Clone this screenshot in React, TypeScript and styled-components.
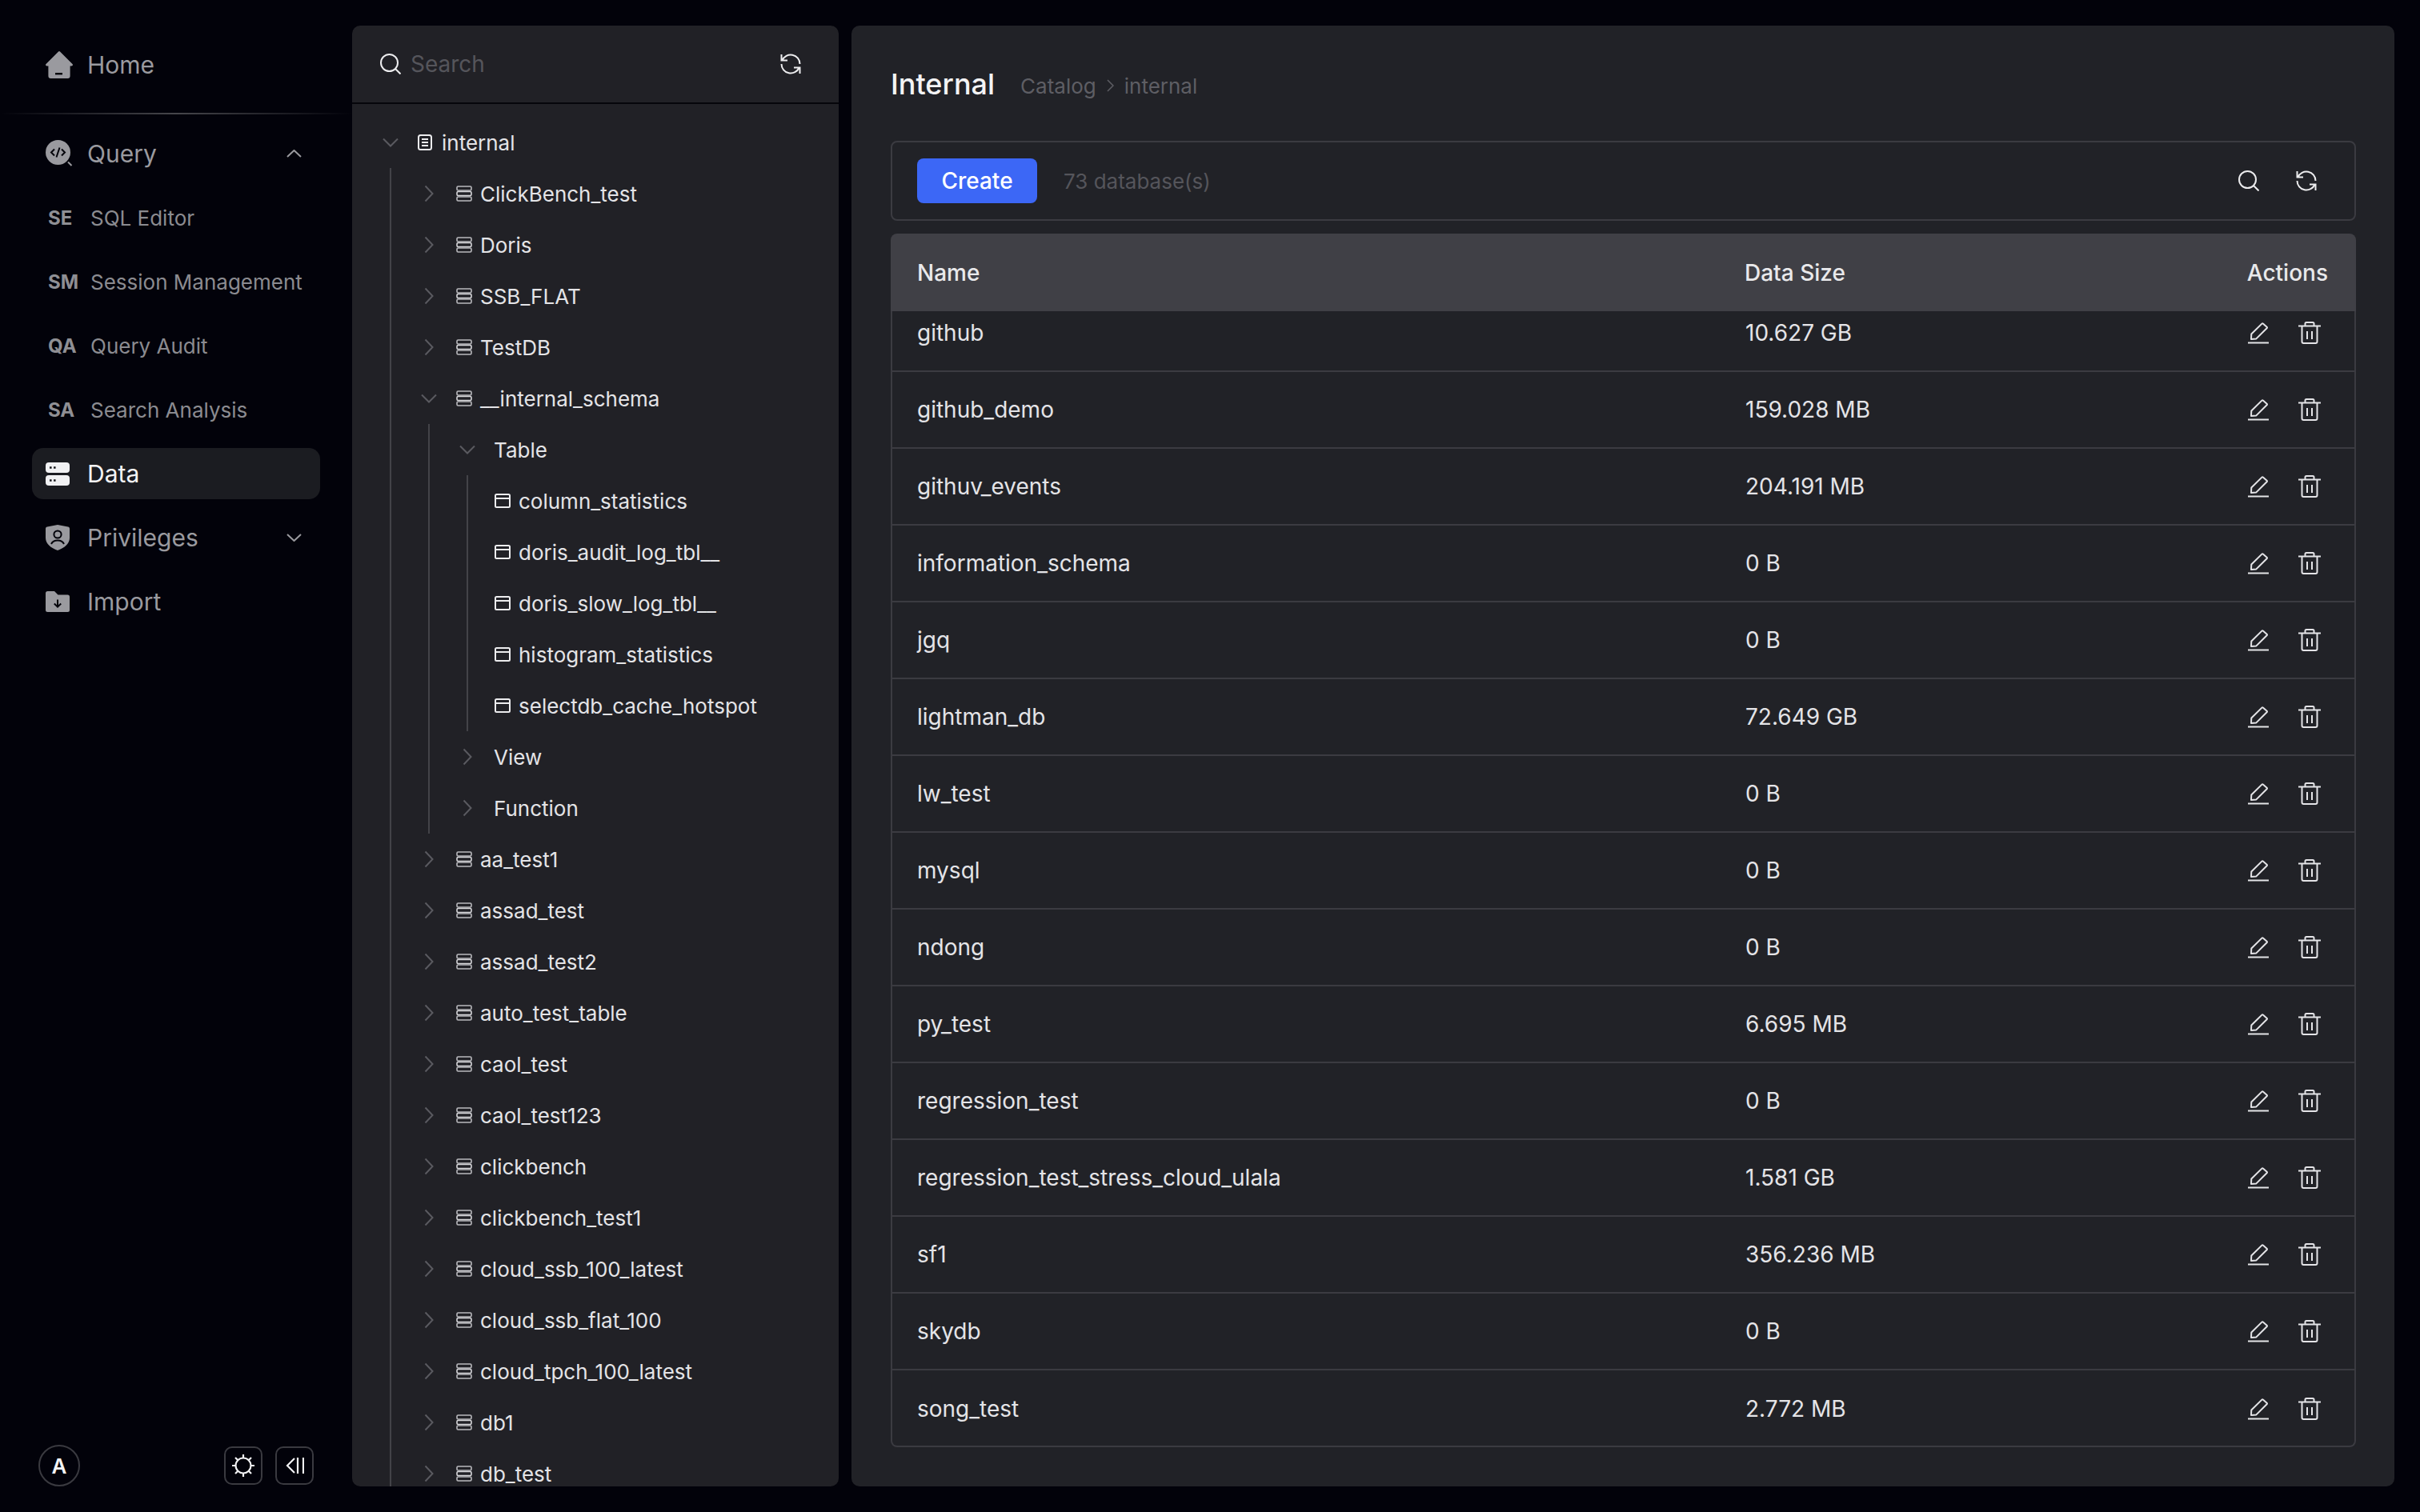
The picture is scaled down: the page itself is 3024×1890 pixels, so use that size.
import React from "react";
import styled, { createGlobalStyle } from "styled-components";

const GlobalStyle = createGlobalStyle`
  html, body {
    margin: 0;
    background: #02020a;
    font-family: Inter, "Noto Sans", sans-serif;
  }
  * {
    box-sizing: border-box;
  }
`;

const Shell = styled.div`
  display: flex;
  height: 100vh;
  padding: 32px 32px 32px 0;
  background: #02020a;
  overflow: hidden;
`;

/* sidebar */

const Sidebar = styled.aside`
  display: flex;
  flex-direction: column;
  flex: 0 0 440px;
  padding-top: 17px;
`;

const Nav = styled.nav`
  display: flex;
  flex-direction: column;
  gap: 16px;
  padding: 0 40px;
`;

const NavRow = styled.div<{ $active?: boolean }>`
  display: flex;
  align-items: center;
  height: 64px;
  padding: 0 23px 0 17px;
  border-radius: 14px;
  font-size: 30px;
  color: ${(p) => (p.$active ? "#f4f4f5" : "#9a9a9f")};
  background: ${(p) => (p.$active ? "#1b1c21" : "transparent")};
`;

const NavIcon = styled.span`
  display: flex;
  align-items: center;
  flex: 0 0 52px;
`;

const SubRow = styled.div`
  display: flex;
  align-items: center;
  height: 64px;
  padding-left: 20px;
  font-size: 26px;
  color: #8b8b90;
`;

const Abbr = styled.span`
  flex: 0 0 53px;
  font-size: 24px;
  font-weight: 700;
  color: #8f8f94;
`;

const NavCaret = styled.svg`
  margin-left: auto;
`;

const Divider = styled.div`
  height: 2px;
  margin: 28px 0 17px;
  background: linear-gradient(90deg, transparent, #46464b 50%, transparent);
`;

const SidebarFooter = styled.div`
  display: flex;
  align-items: center;
  margin-top: auto;
  padding: 0 48px;
`;

const Avatar = styled.div`
  display: flex;
  align-items: center;
  justify-content: center;
  width: 52px;
  height: 52px;
  border: 2px solid #3a3a40;
  border-radius: 50%;
  font-size: 26px;
  font-weight: 600;
  color: #f4f4f5;
`;

const FooterButtons = styled.div`
  display: flex;
  gap: 16px;
  margin-left: auto;
`;

const FooterButton = styled.button`
  display: flex;
  align-items: center;
  justify-content: center;
  width: 48px;
  height: 48px;
  padding: 0;
  background: none;
  border: 2px solid #3a3a40;
  border-radius: 10px;
`;

/* tree panel */

const TreePanel = styled.section`
  display: flex;
  flex-direction: column;
  flex: 0 0 608px;
  margin-right: 16px;
  background: #212126;
  border-radius: 10px;
  overflow: hidden;
`;

const TreeSearch = styled.div`
  display: flex;
  align-items: center;
  flex: 0 0 98px;
  padding: 0 47px 0 35px;
  border-bottom: 2px solid #06060b;
`;

const SearchInput = styled.input`
  flex: 1;
  min-width: 0;
  margin-left: 12px;
  padding: 0;
  background: none;
  border: 0;
  outline: 0;
  font: 400 28px Inter, sans-serif;
  color: #e4e4e7;
  &::placeholder {
    color: #55555b;
    opacity: 1;
  }
`;

const TreeBody = styled.div`
  flex: 1;
  min-height: 0;
  padding: 16px 0 0 32px;
  overflow: hidden;
`;

const TreeRow = styled.div`
  display: flex;
  align-items: center;
  height: 64px;
  font-size: 26px;
  color: #e4e4e7;
  white-space: nowrap;
`;

const Caret = styled.span`
  display: flex;
  align-items: center;
  justify-content: center;
  flex: 0 0 32px;
`;

const TreeIcon = styled.span<{ $leaf?: boolean }>`
  display: flex;
  align-items: center;
  flex: 0 0 30px;
  margin-left: ${(p) => (p.$leaf ? "2px" : "18px")};
`;

const PlainLabel = styled.span`
  margin-left: 17px;
`;

const TreeChildren = styled.div`
  margin-left: 15px;
  padding-left: 31px;
  border-left: 2px solid #434348;
`;

/* main panel */

const MainPanel = styled.main`
  display: flex;
  flex-direction: column;
  flex: 1;
  min-width: 0;
  padding: 48px 48px 48px 49px;
  background: #212227;
  border-radius: 10px;
`;

const TitleRow = styled.header`
  display: flex;
  align-items: center;
  height: 50px;
  margin-bottom: 46px;
`;

const Title = styled.h1`
  margin: 0 32px 0 0;
  font-size: 36px;
  font-weight: 500;
  color: #f4f4f5;
`;

const Crumbs = styled.div`
  display: flex;
  align-items: center;
  gap: 13px;
  margin-top: 4px;
  font-size: 26px;
  color: #5e5e64;
`;

const Toolbar = styled.div`
  display: flex;
  align-items: center;
  flex: 0 0 100px;
  padding: 0 47px 0 31px;
  border: 2px solid #3b3b41;
  border-radius: 8px;
`;

const CreateButton = styled.button`
  width: 150px;
  height: 56px;
  padding: 0;
  background: #3c67f6;
  border: 0;
  border-radius: 8px;
  font: 500 28px Inter, sans-serif;
  color: #fff;
`;

const Count = styled.span`
  margin-left: 33px;
  font-size: 26px;
  color: #55555b;
`;

const ToolbarIcons = styled.div`
  display: flex;
  align-items: center;
  gap: 46px;
  margin-left: auto;
`;

const IconSvg = styled.svg`
  display: block;
  flex-shrink: 0;
`;

const TableWrap = styled.div`
  display: flex;
  flex-direction: column;
  margin-top: 16px;
`;

const TableHead = styled.div`
  display: grid;
  grid-template-columns: 1034px 1fr auto;
  align-items: center;
  height: 97px;
  padding: 0 35px 0 33px;
  background: #404046;
  border-radius: 8px 8px 0 0;
  font-size: 28px;
  font-weight: 500;
  color: #e9e9eb;
`;

const TableBody = styled.div`
  height: 1420px;
  border: solid #3b3b41;
  border-width: 0 2px 2px;
  border-radius: 0 0 8px 8px;
  overflow: hidden;
`;

const TableRow = styled.div<{ $scrolled?: boolean }>`
  display: grid;
  grid-template-columns: 1035px 1fr auto;
  align-items: center;
  height: 96px;
  margin-top: ${(p) => (p.$scrolled ? "-20px" : "0")};
  padding: 0 42px 0 31px;
  border-bottom: 2px solid #3b3b41;
  font-size: 28px;
  color: #e4e4e7;
  &:last-child {
    border-bottom: 0;
  }
`;

const RowActions = styled.div`
  display: flex;
  align-items: center;
  gap: 37px;
`;

/* icons */

const HomeIcon = () => (
  <svg width="34" height="34" viewBox="0 0 34 34">
    <path d="M16 .5a1.5 1.5 0 0 1 2 0L33.5 16c.9.9.4 2.6-1 2.6h-1.9V31a3 3 0 0 1-3 3H6.4a3 3 0 0 1-3-3V18.6H1.5c-1.4 0-1.9-1.7-1-2.6z" fill="#9a9a9f" />
    <rect x="12" y="27" width="9" height="2.4" fill="#02020a" />
  </svg>
);

const QueryIcon = () => (
  <svg width="34" height="34" viewBox="0 0 34 34">
    <circle cx="15.5" cy="15.5" r="15.5" fill="#9a9a9f" />
    <path d="M28 27.5l4.5 4.5" stroke="#9a9a9f" strokeWidth="2" fill="none" />
    <path d="M11 11.5L7 15.5l4 4M20 11.5l4 4-4 4M17.5 9.5l-4 12" stroke="#02020a" strokeWidth="2" fill="none" />
  </svg>
);

const DataIcon = () => (
  <svg width="30" height="30" viewBox="0 0 30 30">
    <rect y="1" width="30" height="13" rx="4" fill="#f1f1f3" />
    <rect y="17" width="30" height="13" rx="4" fill="#f1f1f3" />
    <path d="M5 7.5h2.6M10 7.5h2.6M5 23.5h2.6M10 23.5h2.6" stroke="#1b1c21" strokeWidth="2.4" />
  </svg>
);

const ShieldIcon = () => (
  <svg width="30" height="32" viewBox="0 0 30 32">
    <path d="M15 0l13 2.6c1.2.2 2 1.2 2 2.4v11.5c0 7-6.6 12.6-15 15.5C6.6 29.1 0 23.5 0 16.5V5c0-1.2.8-2.2 2-2.4z" fill="#9a9a9f" />
    <circle cx="15" cy="12" r="4.6" fill="none" stroke="#02020a" strokeWidth="2" />
    <path d="M7 24c1.5-3 4.5-4.4 8-4.4s6.500 1.400 8 4.400" fill="none" stroke="#02020a" strokeWidth="2" />
  </svg>
);

const FolderIcon = () => (
  <svg width="30" height="26" viewBox="0 0 30 26">
    <path d="M0 2.500A2.500 2.500 0 0 1 2.500 0h8.500l4.500 4.500h12A2.500 2.500 0 0 1 30 7v16.500a2.500 2.500 0 0 1-2.500 2.500h-25A2.500 2.500 0 0 1 0 23.500z" fill="#9a9a9f" />
    <path d="M15 10.500v9M10.800 15.500l4.200 4.200 4.200-4.200" fill="none" stroke="#02020a" strokeWidth="2" />
  </svg>
);

const CaretVertical = ({ up }: { up?: boolean }) => (
  <NavCaret width="19" height="10" viewBox="0 0 19 10">
    <path d={up ? "M1 9l8.500-8 8.500 8" : "M1 1l8.500 8 8.500-8"} fill="none" stroke="#9a9a9f" strokeWidth="2" />
  </NavCaret>
);

const SunIcon = () => (
  <svg width="28" height="28" viewBox="0 0 28 28">
    <circle cx="14" cy="14" r="9.500" fill="none" stroke="#f1f1f3" strokeWidth="2.200" />
    <path d="M14 0v4.500M14 23.500V28M0 14h4.500M23.500 14H28M4 4l3.300 3.300M20.700 20.700L24 24M4 24l3.300-3.300M20.700 7.300L24 4" stroke="#f1f1f3" strokeWidth="2.200" />
  </svg>
);

const CollapseIcon = () => (
  <svg width="23" height="20" viewBox="0 0 23 20">
    <path d="M11 1L2 10l9 9" fill="none" stroke="#f1f1f3" strokeWidth="2.200" />
    <path d="M15 0v20M22 0v20" stroke="#f1f1f3" strokeWidth="2.200" />
  </svg>
);

const SearchIcon = () => (
  <IconSvg width="26" height="26" viewBox="0 0 26 26">
    <circle cx="11.500" cy="11.500" r="10.500" fill="none" stroke="#ececee" strokeWidth="2" />
    <path d="M19 19l6.500 6.500" stroke="#ececee" strokeWidth="2" />
  </IconSvg>
);

const RefreshIcon = () => (
  <IconSvg width="26" height="26" viewBox="0 0 26 26">
    <path d="M1.500 1v7.500H9M2.400 8.500A11.500 11.500 0 0 1 24.500 13M24.500 25v-7.500H17M23.600 17.500A11.500 11.500 0 0 1 1.500 13" fill="none" stroke="#ececee" strokeWidth="2" />
  </IconSvg>
);

const ChevronRight = () => (
  <svg width="12" height="22" viewBox="0 0 12 22">
    <path d="M1.500 1.500l9 9.500-9 9.500" fill="none" stroke="#5a5a60" strokeWidth="2" />
  </svg>
);

const ChevronDown = () => (
  <svg width="20" height="12" viewBox="0 0 20 12">
    <path d="M1 1.500l9 9 9-9" fill="none" stroke="#5a5a60" strokeWidth="2" />
  </svg>
);

const CatalogIcon = () => (
  <svg width="18" height="20" viewBox="0 0 18 20">
    <rect x="1" y="1" width="16" height="18" rx="2.500" fill="none" stroke="#ececee" strokeWidth="2" />
    <path d="M5 6h8M5 10h8M5 14h8" stroke="#ececee" strokeWidth="2" />
  </svg>
);

const DatabaseIcon = () => (
  <svg width="20" height="20" viewBox="0 0 20 20">
    <rect x="1" y="1" width="18" height="5" rx="1.500" fill="none" stroke="#b9b9bd" strokeWidth="1.600" />
    <rect x="1" y="7.500" width="18" height="5" rx="1.500" fill="none" stroke="#d8d8db" strokeWidth="1.600" />
    <rect x="1" y="14" width="18" height="5" rx="1.500" fill="none" stroke="#b9b9bd" strokeWidth="1.600" />
  </svg>
);

const TableIcon = () => (
  <svg width="20" height="18" viewBox="0 0 20 18">
    <rect x="1" y="1" width="18" height="16" rx="1.500" fill="none" stroke="#ececee" strokeWidth="2" />
    <path d="M1 6h18" stroke="#ececee" strokeWidth="2" />
  </svg>
);

const EditIcon = () => (
  <IconSvg width="26" height="27" viewBox="0 0 26 27">
    <path d="M4.300 14.500L17.400 1.600a1 1 0 0 1 1.400 0L23.600 5.800a1 1 0 0 1 0 1.400L10.400 20.400l-6.400.6z" fill="none" stroke="#e4e4e7" strokeWidth="2" strokeLinejoin="round" />
    <path d="M0 25.500h26" stroke="#e4e4e7" strokeWidth="2" />
  </IconSvg>
);

const TrashIcon = () => (
  <IconSvg width="28" height="28" viewBox="0 0 28 28">
    <path d="M0 5.500h28M8.500 5.500V2.500A1.500 1.500 0 0 1 10 1h8a1.500 1.500 0 0 1 1.500 1.500v3M4.500 5.500v19.500a2 2 0 0 0 2 2h15a2 2 0 0 0 2-2V5.500M11 12v10M17 12v10" fill="none" stroke="#e4e4e7" strokeWidth="2" />
  </IconSvg>
);

/* data */

const subItems = [
  ["SE", "SQL Editor"],
  ["SM", "Session Management"],
  ["QA", "Query Audit"],
  ["SA", "Search Analysis"],
];

const topDatabases = ["ClickBench_test", "Doris", "SSB_FLAT", "TestDB"];

const schemaTables = [
  "column_statistics",
  "doris_audit_log_tbl__",
  "doris_slow_log_tbl__",
  "histogram_statistics",
  "selectdb_cache_hotspot",
];

const restDatabases = [
  "aa_test1",
  "assad_test",
  "assad_test2",
  "auto_test_table",
  "caol_test",
  "caol_test123",
  "clickbench",
  "clickbench_test1",
  "cloud_ssb_100_latest",
  "cloud_ssb_flat_100",
  "cloud_tpch_100_latest",
  "db1",
  "db_test",
];

const databases = [
  ["github", "10.627 GB"],
  ["github_demo", "159.028 MB"],
  ["githuv_events", "204.191 MB"],
  ["information_schema", "0 B"],
  ["jgq", "0 B"],
  ["lightman_db", "72.649 GB"],
  ["lw_test", "0 B"],
  ["mysql", "0 B"],
  ["ndong", "0 B"],
  ["py_test", "6.695 MB"],
  ["regression_test", "0 B"],
  ["regression_test_stress_cloud_ulala", "1.581 GB"],
  ["sf1", "356.236 MB"],
  ["skydb", "0 B"],
  ["song_test", "2.772 MB"],
];

const DbRow = ({ name, open }: { name: string; open?: boolean }) => (
  <TreeRow>
    <Caret>{open ? <ChevronDown /> : <ChevronRight />}</Caret>
    <TreeIcon>
      <DatabaseIcon />
    </TreeIcon>
    {name}
  </TreeRow>
);

const GroupRow = ({ name, open }: { name: string; open?: boolean }) => (
  <TreeRow>
    <Caret>{open ? <ChevronDown /> : <ChevronRight />}</Caret>
    <PlainLabel>{name}</PlainLabel>
  </TreeRow>
);

const App = () => {
  return (
    <Shell>
      <GlobalStyle />
      <Sidebar>
        <Nav>
          <NavRow>
            <NavIcon>
              <HomeIcon />
            </NavIcon>
            Home
          </NavRow>
        </Nav>
        <Divider />
        <Nav>
          <NavRow>
            <NavIcon>
              <QueryIcon />
            </NavIcon>
            Query
            <CaretVertical up />
          </NavRow>
          {subItems.map(([abbr, label]) => (
            <SubRow key={abbr}>
              <Abbr>{abbr}</Abbr>
              {label}
            </SubRow>
          ))}
          <NavRow $active>
            <NavIcon>
              <DataIcon />
            </NavIcon>
            Data
          </NavRow>
          <NavRow>
            <NavIcon>
              <ShieldIcon />
            </NavIcon>
            Privileges
            <CaretVertical />
          </NavRow>
          <NavRow>
            <NavIcon>
              <FolderIcon />
            </NavIcon>
            Import
          </NavRow>
        </Nav>
        <SidebarFooter>
          <Avatar>A</Avatar>
          <FooterButtons>
            <FooterButton>
              <SunIcon />
            </FooterButton>
            <FooterButton>
              <CollapseIcon />
            </FooterButton>
          </FooterButtons>
        </SidebarFooter>
      </Sidebar>

      <TreePanel>
        <TreeSearch>
          <SearchIcon />
          <SearchInput placeholder="Search" />
          <RefreshIcon />
        </TreeSearch>
        <TreeBody>
          <TreeRow>
            <Caret>
              <ChevronDown />
            </Caret>
            <TreeIcon>
              <CatalogIcon />
            </TreeIcon>
            internal
          </TreeRow>
          <TreeChildren>
            {topDatabases.map((name) => (
              <DbRow key={name} name={name} />
            ))}
            <DbRow name="__internal_schema" open />
            <TreeChildren>
              <GroupRow name="Table" open />
              <TreeChildren>
                {schemaTables.map((name) => (
                  <TreeRow key={name}>
                    <TreeIcon $leaf>
                      <TableIcon />
                    </TreeIcon>
                    {name}
                  </TreeRow>
                ))}
              </TreeChildren>
              <GroupRow name="View" />
              <GroupRow name="Function" />
            </TreeChildren>
            {restDatabases.map((name) => (
              <DbRow key={name} name={name} />
            ))}
          </TreeChildren>
        </TreeBody>
      </TreePanel>

      <MainPanel>
        <TitleRow>
          <Title>Internal</Title>
          <Crumbs>
            Catalog
            <svg width="9" height="16" viewBox="0 0 9 16">
              <path d="M1 1l7 7-7 7" fill="none" stroke="#5e5e64" strokeWidth="1.500" />
            </svg>
            internal
          </Crumbs>
        </TitleRow>
        <Toolbar>
          <CreateButton>Create</CreateButton>
          <Count>73 database(s)</Count>
          <ToolbarIcons>
            <SearchIcon />
            <RefreshIcon />
          </ToolbarIcons>
        </Toolbar>
        <TableWrap>
          <TableHead>
            <span>Name</span>
            <span>Data Size</span>
            <span>Actions</span>
          </TableHead>
          <TableBody>
            {databases.map(([name, size], i) => (
              <TableRow key={name} $scrolled={i === 0}>
                <span>{name}</span>
                <span>{size}</span>
                <RowActions>
                  <EditIcon />
                  <TrashIcon />
                </RowActions>
              </TableRow>
            ))}
          </TableBody>
        </TableWrap>
      </MainPanel>
    </Shell>
  );
};

export default App;
